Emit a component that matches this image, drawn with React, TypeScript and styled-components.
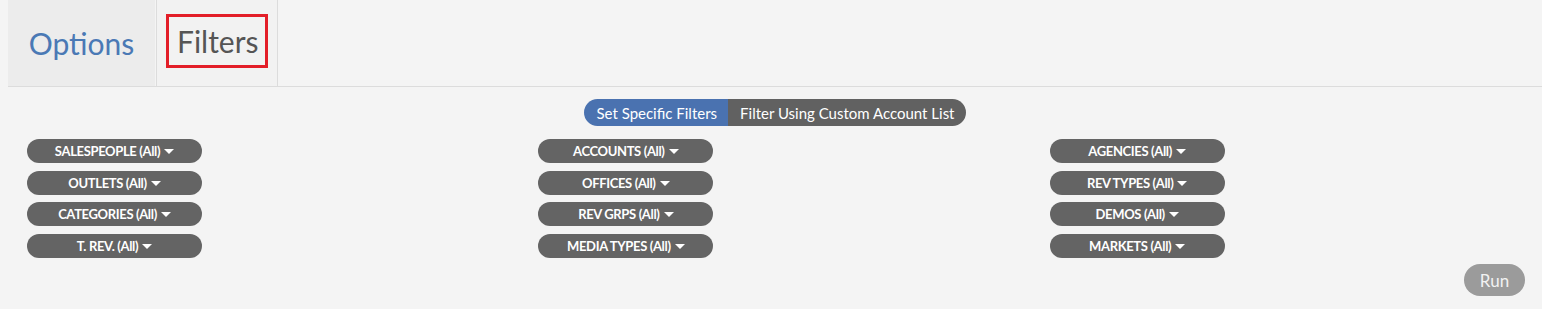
import React, { useState } from "react";
import styled, { createGlobalStyle } from "styled-components";

const GlobalStyle = createGlobalStyle`
    html, body {
        margin: 0;
        padding: 0;
        background: #f4f4f4;
        font-family: Lato, "Open Sans", Arial, sans-serif;
    }
`

const Page = styled.div`
    padding: 0 0 0 8px;
    min-height: 309px;
    box-sizing: border-box;
`

const TabBar = styled.div`
    display: flex;
    height: 86px;
    border-bottom: 1px solid #dcdcdc;
`

const Tab = styled.div<{ $active?: boolean }>`
    display: flex;
    align-items: center;
    height: 100%;
    box-sizing: border-box;
    font-size: 30px;
    cursor: pointer;
    ${(p) => p.$active ? `
        margin-left: 1px;
        padding: 0 9px;
        background: #f2f2f2;
        color: #555555;
        border-left: 1px solid #dcdcdc;
        border-right: 1px solid #dcdcdc;
    ` : `
        width: 147px;
        justify-content: center;
        background: #ececec;
        color: #4a79b5;
    `}
`

const Highlight = styled.span`
    display: flex;
    align-items: center;
    height: 54px;
    padding: 0 6px 0 8px;
    margin-top: -4px;
    box-sizing: border-box;
    border: 3px solid #e31e28;
`

const ToggleRow = styled.div`
    display: flex;
    justify-content: center;
    margin-top: 12px;
`

const Toggle = styled.div`
    display: flex;
    border-radius: 14px;
    overflow: hidden;
`

const ToggleOption = styled.button<{ $on?: boolean }>`
    border: none;
    height: 27px;
    padding: 0 11px 0 12px;
    font-family: inherit;
    font-size: 15px;
    color: #ffffff;
    background: ${(p) => (p.$on ? "#4a72b0" : "#616161")};
    cursor: pointer;
`

const Grid = styled.div`
    display: grid;
    grid-template-columns: repeat(3, 1fr);
    margin-top: 13px;
`

const Column = styled.div`
    display: flex;
    flex-direction: column;
    gap: 7.7px;
    padding-left: 19px;
`

const Pill = styled.button`
    display: flex;
    align-items: center;
    justify-content: center;
    gap: 4px;
    width: 175px;
    height: 24px;
    border: none;
    border-radius: 12px;
    background: #646464;
    color: #ffffff;
    font-family: inherit;
    font-weight: 700;
    font-size: 13px;
    letter-spacing: -0.35px;
    cursor: pointer;
`

const Caret = styled.span`
    width: 0;
    height: 0;
    border-left: 5px solid transparent;
    border-right: 5px solid transparent;
    border-top: 5px solid #ffffff;
    margin-top: 1px;
`

const Footer = styled.div`
    display: flex;
    justify-content: flex-end;
    padding: 6px 17px 0 0;
`

const RunButton = styled.button`
    width: 61px;
    height: 32px;
    border: none;
    border-radius: 16px;
    background: #9b9b9b;
    color: #f2f2f2;
    font-family: inherit;
    font-size: 17px;
    cursor: pointer;
`

const columns = [
    ["SALESPEOPLE", "OUTLETS", "CATEGORIES", "T. REV."],
    ["ACCOUNTS", "OFFICES", "REV GRPS", "MEDIA TYPES"],
    ["AGENCIES", "REV TYPES", "DEMOS", "MARKETS"],
]

const App: React.FC = () => {
    const [mode, setMode] = useState("specific")
    return (
        <Page>
            <GlobalStyle />
            <TabBar>
                <Tab>Options</Tab>
                <Tab $active>
                    <Highlight>Filters</Highlight>
                </Tab>
            </TabBar>
            <ToggleRow>
                <Toggle>
                    <ToggleOption $on={mode === "specific"} onClick={() => setMode("specific")}>
                        Set Specific Filters
                    </ToggleOption>
                    <ToggleOption $on={mode === "custom"} onClick={() => setMode("custom")}>
                        Filter Using Custom Account List
                    </ToggleOption>
                </Toggle>
            </ToggleRow>
            <Grid>
                {columns.map((col, i) => (
                    <Column key={i}>
                        {col.map((name) => (
                            <Pill key={name}>
                                {name} (All)
                                <Caret />
                            </Pill>
                        ))}
                    </Column>
                ))}
            </Grid>
            <Footer>
                <RunButton>Run</RunButton>
            </Footer>
        </Page>
    )
}

export default App
